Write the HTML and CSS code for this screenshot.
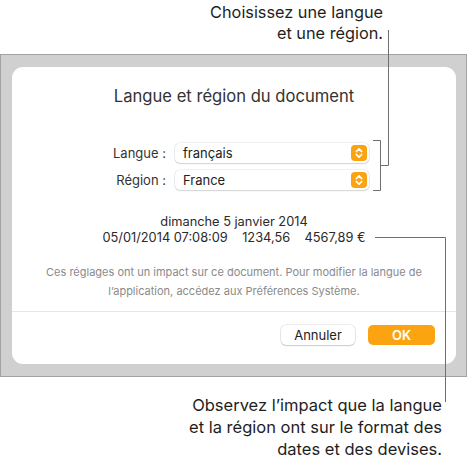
FILE: index.html
```html
<!DOCTYPE html>
<html lang="fr">
<head>
<meta charset="utf-8">
<link rel="stylesheet" href="styles.css">
</head>
<body>
<div class="page">
  <div class="callout-top">Choisissez une langue<br>et une région.</div>
  <div class="frame">
    <div class="card">
      <div class="title">Langue et région du document</div>
      <div class="form">
        <div class="row">
          <span class="label">Langue :</span>
          <div class="select"><span>français</span>
            <svg class="stepper" width="16" height="16" viewBox="0 0 16 16"><rect x="0" y="0" width="16" height="16" rx="4" fill="#fca312"/><path d="M5.2 6.6 L8 3.9 L10.8 6.6 M5.2 9.4 L8 12.1 L10.8 9.4" fill="none" stroke="#fff" stroke-width="1.5" stroke-linecap="round" stroke-linejoin="round"/></svg>
          </div>
        </div>
        <div class="row">
          <span class="label">Région :</span>
          <div class="select"><span>France</span>
            <svg class="stepper" width="16" height="16" viewBox="0 0 16 16"><rect x="0" y="0" width="16" height="16" rx="4" fill="#fca312"/><path d="M5.2 6.6 L8 3.9 L10.8 6.6 M5.2 9.4 L8 12.1 L10.8 9.4" fill="none" stroke="#fff" stroke-width="1.5" stroke-linecap="round" stroke-linejoin="round"/></svg>
          </div>
        </div>
      </div>
      <div class="sample">
        <div>dimanche 5 janvier 2014</div>
        <div>05/01/2014 07:08:09&nbsp;&nbsp;&nbsp; 1234,56&nbsp;&nbsp;&nbsp; 4567,89 €</div>
      </div>
      <div class="help">Ces réglages ont un impact sur ce document. Pour modifier la langue de<br>l’application, accédez aux Préférences Système.</div>
      <div class="sep"></div>
      <div class="buttons">
        <button class="btn cancel">Annuler</button>
        <button class="btn ok">OK</button>
      </div>
    </div>
  </div>
  <div class="callout-bottom">Observez l’impact que la langue<br>et la région ont sur le format des<br>dates et des devises.</div>
  <svg class="leaders" width="468" height="460" viewBox="0 0 468 460">
    <path d="M388.5 30 V165.5 H380.5 M373 140.5 H380.5 V190.5 H373" fill="none" stroke="#6f6f6f" stroke-width="1"/>
    <path d="M375 237.5 H445.5 V402" fill="none" stroke="#6f6f6f" stroke-width="1"/>
  </svg>
</div>
</body>
</html>
```
FILE: styles.css
```css
html, body {
  margin: 0;
  padding: 0;
  background: #fff;
}
.page {
  position: relative;
  width: 468px;
  height: 460px;
  font-family: Inter, "Liberation Sans", Arial, sans-serif;
  color: #222;
  overflow: hidden;
}
.callout-top {
  box-sizing: border-box;
  height: 54px;
  padding-top: 2px;
  padding-right: 85px;
  text-align: right;
  font-size: 16.3px;
  line-height: 21px;
  color: #1e1e1e;
}
.frame {
  box-sizing: border-box;
  width: 467px;
  height: 323px;
  border: 1px solid #a3a3a3;
  background: #d0d0d0;
  padding: 12px 10px 12px 11px;
}
.card {
  box-sizing: border-box;
  height: 297px;
  background: #fff;
  border-radius: 11px;
  display: flex;
  flex-direction: column;
}
.title {
  padding-top: 18px;
  text-align: center;
  font-size: 16.6px;
  line-height: 22px;
  color: #333;
}
.form {
  margin-top: 36px;
  display: flex;
  flex-direction: column;
  gap: 7px;
}
.row {
  display: flex;
  align-items: center;
}
.label {
  box-sizing: border-box;
  width: 154px;
  text-align: right;
  font-size: 13px;
  color: #333;
}
.select {
  box-sizing: border-box;
  margin-left: 9px;
  width: 194px;
  height: 20px;
  border-radius: 5px;
  background: #fff;
  box-shadow: 0 0 0 0.5px rgba(0,0,0,0.12), 0 1px 1.5px rgba(0,0,0,0.12);
  display: flex;
  align-items: center;
  justify-content: space-between;
  padding: 0 2px 0 8px;
  font-size: 13px;
  color: #222;
}
.stepper {
  display: block;
}
.sample {
  margin-top: 24px;
  text-align: center;
  font-size: 12.8px;
  line-height: 16px;
  color: #2a2a2a;
}
.help {
  margin-top: 17px;
  text-align: center;
  font-size: 11px;
  line-height: 19px;
  color: #8a8a8a;
}
.sep {
  margin-top: 10px;
  height: 1px;
  background: #e6e6e6;
}
.buttons {
  margin-top: 13px;
  display: flex;
  justify-content: flex-end;
  gap: 13px;
  padding-right: 21px;
}
.btn {
  box-sizing: border-box;
  height: 20px;
  border: none;
  border-radius: 5px;
  font-family: Inter, "Liberation Sans", Arial, sans-serif;
  font-size: 13px;
  padding: 0;
}
.cancel {
  width: 74px;
  background: #fff;
  color: #222;
  box-shadow: 0 0 0 0.5px rgba(0,0,0,0.15), 0 1px 1.5px rgba(0,0,0,0.14);
}
.ok {
  width: 67px;
  background: #fca312;
  color: #fff;
  font-weight: 600;
}
.callout-bottom {
  margin-top: 17px;
  padding-right: 26px;
  text-align: right;
  font-size: 16.5px;
  line-height: 22px;
  color: #1e1e1e;
}
.leaders {
  position: absolute;
  left: 0;
  top: 0;
  pointer-events: none;
}
```
